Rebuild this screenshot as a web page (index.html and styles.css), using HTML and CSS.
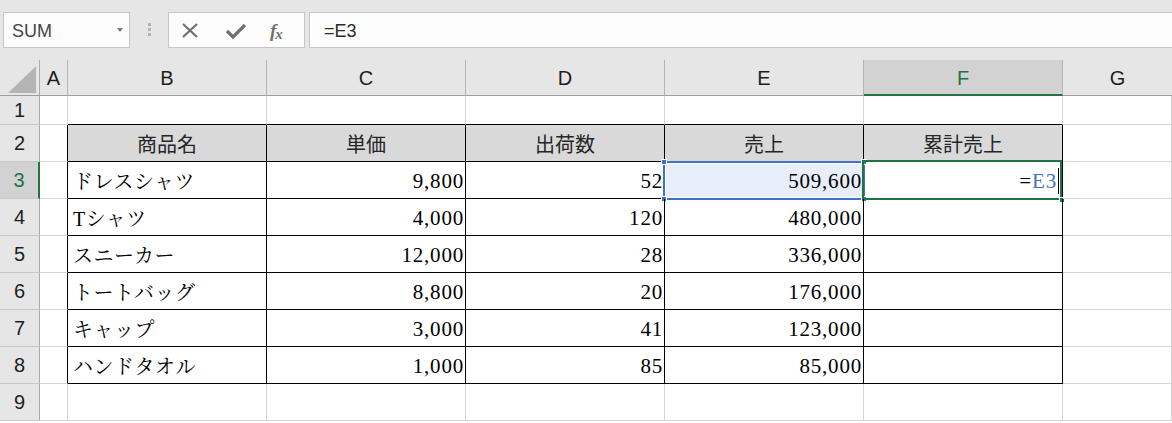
FILE: index.html
```html
<!DOCTYPE html>
<html lang="ja">
<head>
<meta charset="utf-8">
<title>Excel</title>
<link rel="stylesheet" href="styles.css">
</head>
<body>
<div class="toolbar">
  <div class="namebox"><span class="nb-text">SUM</span><span class="nb-arrow"></span></div>
  <div class="grip"><span></span><span></span><span></span></div>
  <div class="fbtns">
    <svg class="ico" width="20" height="20" viewBox="0 0 20 20"><path d="M3 3 L17 16 M17 3 L3 16" stroke="#707070" stroke-width="2.2" fill="none"/></svg>
    <svg class="ico" width="22" height="20" viewBox="0 0 22 20"><path d="M2 10 L8 16 L20 4" stroke="#707070" stroke-width="3.2" fill="none" stroke-linejoin="miter"/></svg>
    <span class="fx">f<span class="fx-x">x</span></span>
  </div>
  <div class="formula">=E3</div>
</div>

<div class="sheet">
  <!-- column header row -->
  <div class="corner"><span class="tri"></span></div>
  <div class="ch">A</div>
  <div class="ch">B</div>
  <div class="ch">C</div>
  <div class="ch">D</div>
  <div class="ch">E</div>
  <div class="ch sel">F</div>
  <div class="ch last">G</div>

  <!-- row 1 -->
  <div class="rh">1</div>
  <div class="c"></div>
  <div class="c bt"></div>
  <div class="c bt"></div>
  <div class="c bt"></div>
  <div class="c bt"></div>
  <div class="c bt"></div>
  <div class="c"></div>

  <!-- row 2 -->
  <div class="rh">2</div>
  <div class="c bl"></div>
  <div class="c t th">商品名</div>
  <div class="c t th">単価</div>
  <div class="c t th">出荷数</div>
  <div class="c t th">売上</div>
  <div class="c t th">累計売上</div>
  <div class="c"></div>

  <!-- row 3 -->
  <div class="rh sel">3</div>
  <div class="c bl"></div>
  <div class="c t txt">ドレスシャツ</div>
  <div class="c t num">9,800</div>
  <div class="c t num">52</div>
  <div class="c t num ref">509,600<span class="refbox"><i class="h tl"></i><i class="h tr"></i><i class="h bl2"></i><i class="h br"></i></span></div>
  <div class="c t num active"><span class="eq">=</span><span class="refword">E3</span><span class="caret"></span><span class="actbox"><i class="fill"></i></span></div>
  <div class="c"></div>

  <!-- row 4 -->
  <div class="rh">4</div>
  <div class="c bl"></div>
  <div class="c t txt">Tシャツ</div>
  <div class="c t num">4,000</div>
  <div class="c t num">120</div>
  <div class="c t num">480,000</div>
  <div class="c t"></div>
  <div class="c"></div>

  <!-- row 5 -->
  <div class="rh">5</div>
  <div class="c bl"></div>
  <div class="c t txt">スニーカー</div>
  <div class="c t num">12,000</div>
  <div class="c t num">28</div>
  <div class="c t num">336,000</div>
  <div class="c t"></div>
  <div class="c"></div>

  <!-- row 6 -->
  <div class="rh">6</div>
  <div class="c bl"></div>
  <div class="c t txt">トートバッグ</div>
  <div class="c t num">8,800</div>
  <div class="c t num">20</div>
  <div class="c t num">176,000</div>
  <div class="c t"></div>
  <div class="c"></div>

  <!-- row 7 -->
  <div class="rh">7</div>
  <div class="c bl"></div>
  <div class="c t txt">キャップ</div>
  <div class="c t num">3,000</div>
  <div class="c t num">41</div>
  <div class="c t num">123,000</div>
  <div class="c t"></div>
  <div class="c"></div>

  <!-- row 8 -->
  <div class="rh">8</div>
  <div class="c bl"></div>
  <div class="c t txt">ハンドタオル</div>
  <div class="c t num">1,000</div>
  <div class="c t num">85</div>
  <div class="c t num">85,000</div>
  <div class="c t"></div>
  <div class="c"></div>

  <!-- row 9 -->
  <div class="rh">9</div>
  <div class="c"></div>
  <div class="c"></div>
  <div class="c"></div>
  <div class="c"></div>
  <div class="c"></div>
  <div class="c"></div>
  <div class="c"></div>
</div>
</body>
</html>
```

FILE: styles.css
```css
* { box-sizing: border-box; }
html, body {
  margin: 0;
  padding: 0;
  background: #ffffff;
  overflow: hidden;
}
body {
  width: 1172px;
  height: 423px;
  font-family: "Liberation Sans", "Noto Sans CJK JP", sans-serif;
}

/* ---------- toolbar ---------- */
.toolbar {
  height: 60px;
  background: #e6e6e6;
  display: flex;
  align-items: flex-start;
  padding-top: 12px;
  padding-left: 3px;
}
.namebox {
  width: 127px;
  height: 36px;
  background: #fdfdfd;
  border: 1px solid #c6c6c6;
  display: flex;
  align-items: center;
  padding-left: 8px;
  padding-right: 6px;
  padding-top: 3px;
  justify-content: space-between;
}
.nb-text {
  font-size: 18px;
  color: #454545;
}
.nb-arrow {
  width: 0;
  height: 0;
  border-left: 3.5px solid transparent;
  border-right: 3.5px solid transparent;
  border-top: 4px solid #7a7a7a;
  margin-top: -3px;
}
.grip {
  width: 38px;
  height: 36px;
  display: flex;
  flex-direction: column;
  align-items: center;
  gap: 2px;
  padding-top: 11px;
}
.grip span {
  width: 3px;
  height: 3px;
  background: #b3b3b3;
}
.fbtns {
  width: 137px;
  height: 36px;
  background: #fdfdfd;
  border: 1px solid #c6c6c6;
  display: flex;
  align-items: center;
  padding-left: 11px;
  gap: 24px;
  padding-top: 1px;
}
.ico { display: block; }
.fbtns .ico:nth-child(2) { margin-left: 1px; }
.fx {
  font-family: "Liberation Serif", serif;
  font-style: italic;
  font-weight: bold;
  font-size: 19px;
  color: #707070;
  margin-left: -1px;
  letter-spacing: -1px;
}
.fx-x {
  font-size: 15px;
  position: relative;
  top: 2px;
}
.formula {
  flex: 1;
  margin-left: 4px;
  height: 36px;
  background: #fdfdfd;
  border: 1px solid #c6c6c6;
  border-right: none;
  font-size: 18px;
  color: #2a2a2a;
  padding-left: 14px;
  padding-top: 1px;
  line-height: 34px;
}

/* ---------- sheet grid ---------- */
.sheet {
  display: grid;
  grid-template-columns: 40px 28px 199px 199px 199px 199px 199px 1fr;
  grid-template-rows: 36px 29px repeat(8, 37px);
}
.corner {
  background: #e6e6e6;
  border-right: 1px solid #ababab;
  border-bottom: 1px solid #9e9e9e;
  position: relative;
}
.tri {
  position: absolute;
  right: 3px;
  bottom: 2px;
  width: 0;
  height: 0;
  border-left: 28px solid transparent;
  border-bottom: 27px solid #b4b4b4;
}
.ch {
  background: #e6e6e6;
  border-right: 1px solid #b4b4b4;
  border-bottom: 1px solid #9e9e9e;
  font-size: 20px;
  color: #1e1e1e;
  display: flex;
  align-items: center;
  justify-content: center;
  padding-top: 1px;
}
.ch.last { border-right: none; }
.ch.sel {
  background: #d2d2d2;
  color: #217346;
  border-bottom: 2px solid #217346;
  padding-top: 2px;
}
.rh {
  background: #e6e6e6;
  border-right: 1px solid #ababab;
  border-bottom: 1px solid #c9c9c9;
  font-size: 20px;
  color: #1e1e1e;
  display: flex;
  align-items: center;
  justify-content: center;
}
.rh.sel {
  background: #d2d2d2;
  color: #217346;
  border-right: 2px solid #217346;
}

.c {
  border-right: 1px solid #d4d4d4;
  border-bottom: 1px solid #d4d4d4;
  font-family: "Liberation Serif", "Noto Serif CJK JP", "Noto Sans CJK JP", serif;
  font-size: 20px;
  color: #000;
  display: flex;
  align-items: center;
  white-space: nowrap;
  position: relative;
}
.c.bt { border-bottom-color: #000; }
.c.bl { border-right-color: #000; }
.c.t {
  border-right-color: #000;
  border-bottom-color: #000;
}
.c.th {
  background: #d9d9d9;
  justify-content: center;
  font-family: "Noto Sans CJK JP", sans-serif;
  font-size: 20px;
  color: #262626;
  padding-top: 1px;
}
.c.txt {
  padding-left: 5px;
  letter-spacing: 0.5px;
}
.c.num {
  justify-content: flex-end;
  padding-right: 1px;
  padding-top: 2px;
  font-size: 21px;
  letter-spacing: 0.8px;
}

/* reference highlight on E3 */
.c.ref { background: #e8eef9; }
.refbox {
  position: absolute;
  top: -1px;
  left: -2px;
  right: -2px;
  bottom: -2px;
  border: 2px solid #3f72c6;
  box-shadow: inset 0 0 0 1px #ffffff;
}
.h {
  position: absolute;
  width: 6px;
  height: 6px;
  background: #3f72c6;
  border: 1px solid #ffffff;
}
.h.tl { left: -4px; top: -4px; }
.h.tr { right: -4px; top: -4px; }
.h.bl2 { left: -4px; bottom: -4px; }
.h.br { right: -4px; bottom: -4px; }

/* active cell F3 */
.c.active { padding-right: 5px; letter-spacing: 0; }
.eq { color: #000; margin-right: 1px; }
.refword {
  color: #4472c4;
  letter-spacing: 0.8px;
}
.caret {
  position: absolute;
  right: 3px;
  top: 6px;
  width: 1px;
  height: 26px;
  background: #000;
}
.actbox {
  position: absolute;
  top: -2px;
  left: -2px;
  right: 0;
  bottom: -2px;
  border: 2px solid #217346;
}
.fill {
  position: absolute;
  right: -5px;
  bottom: -5px;
  width: 6px;
  height: 6px;
  background: #217346;
  border: 1px solid #ffffff;
}
```
